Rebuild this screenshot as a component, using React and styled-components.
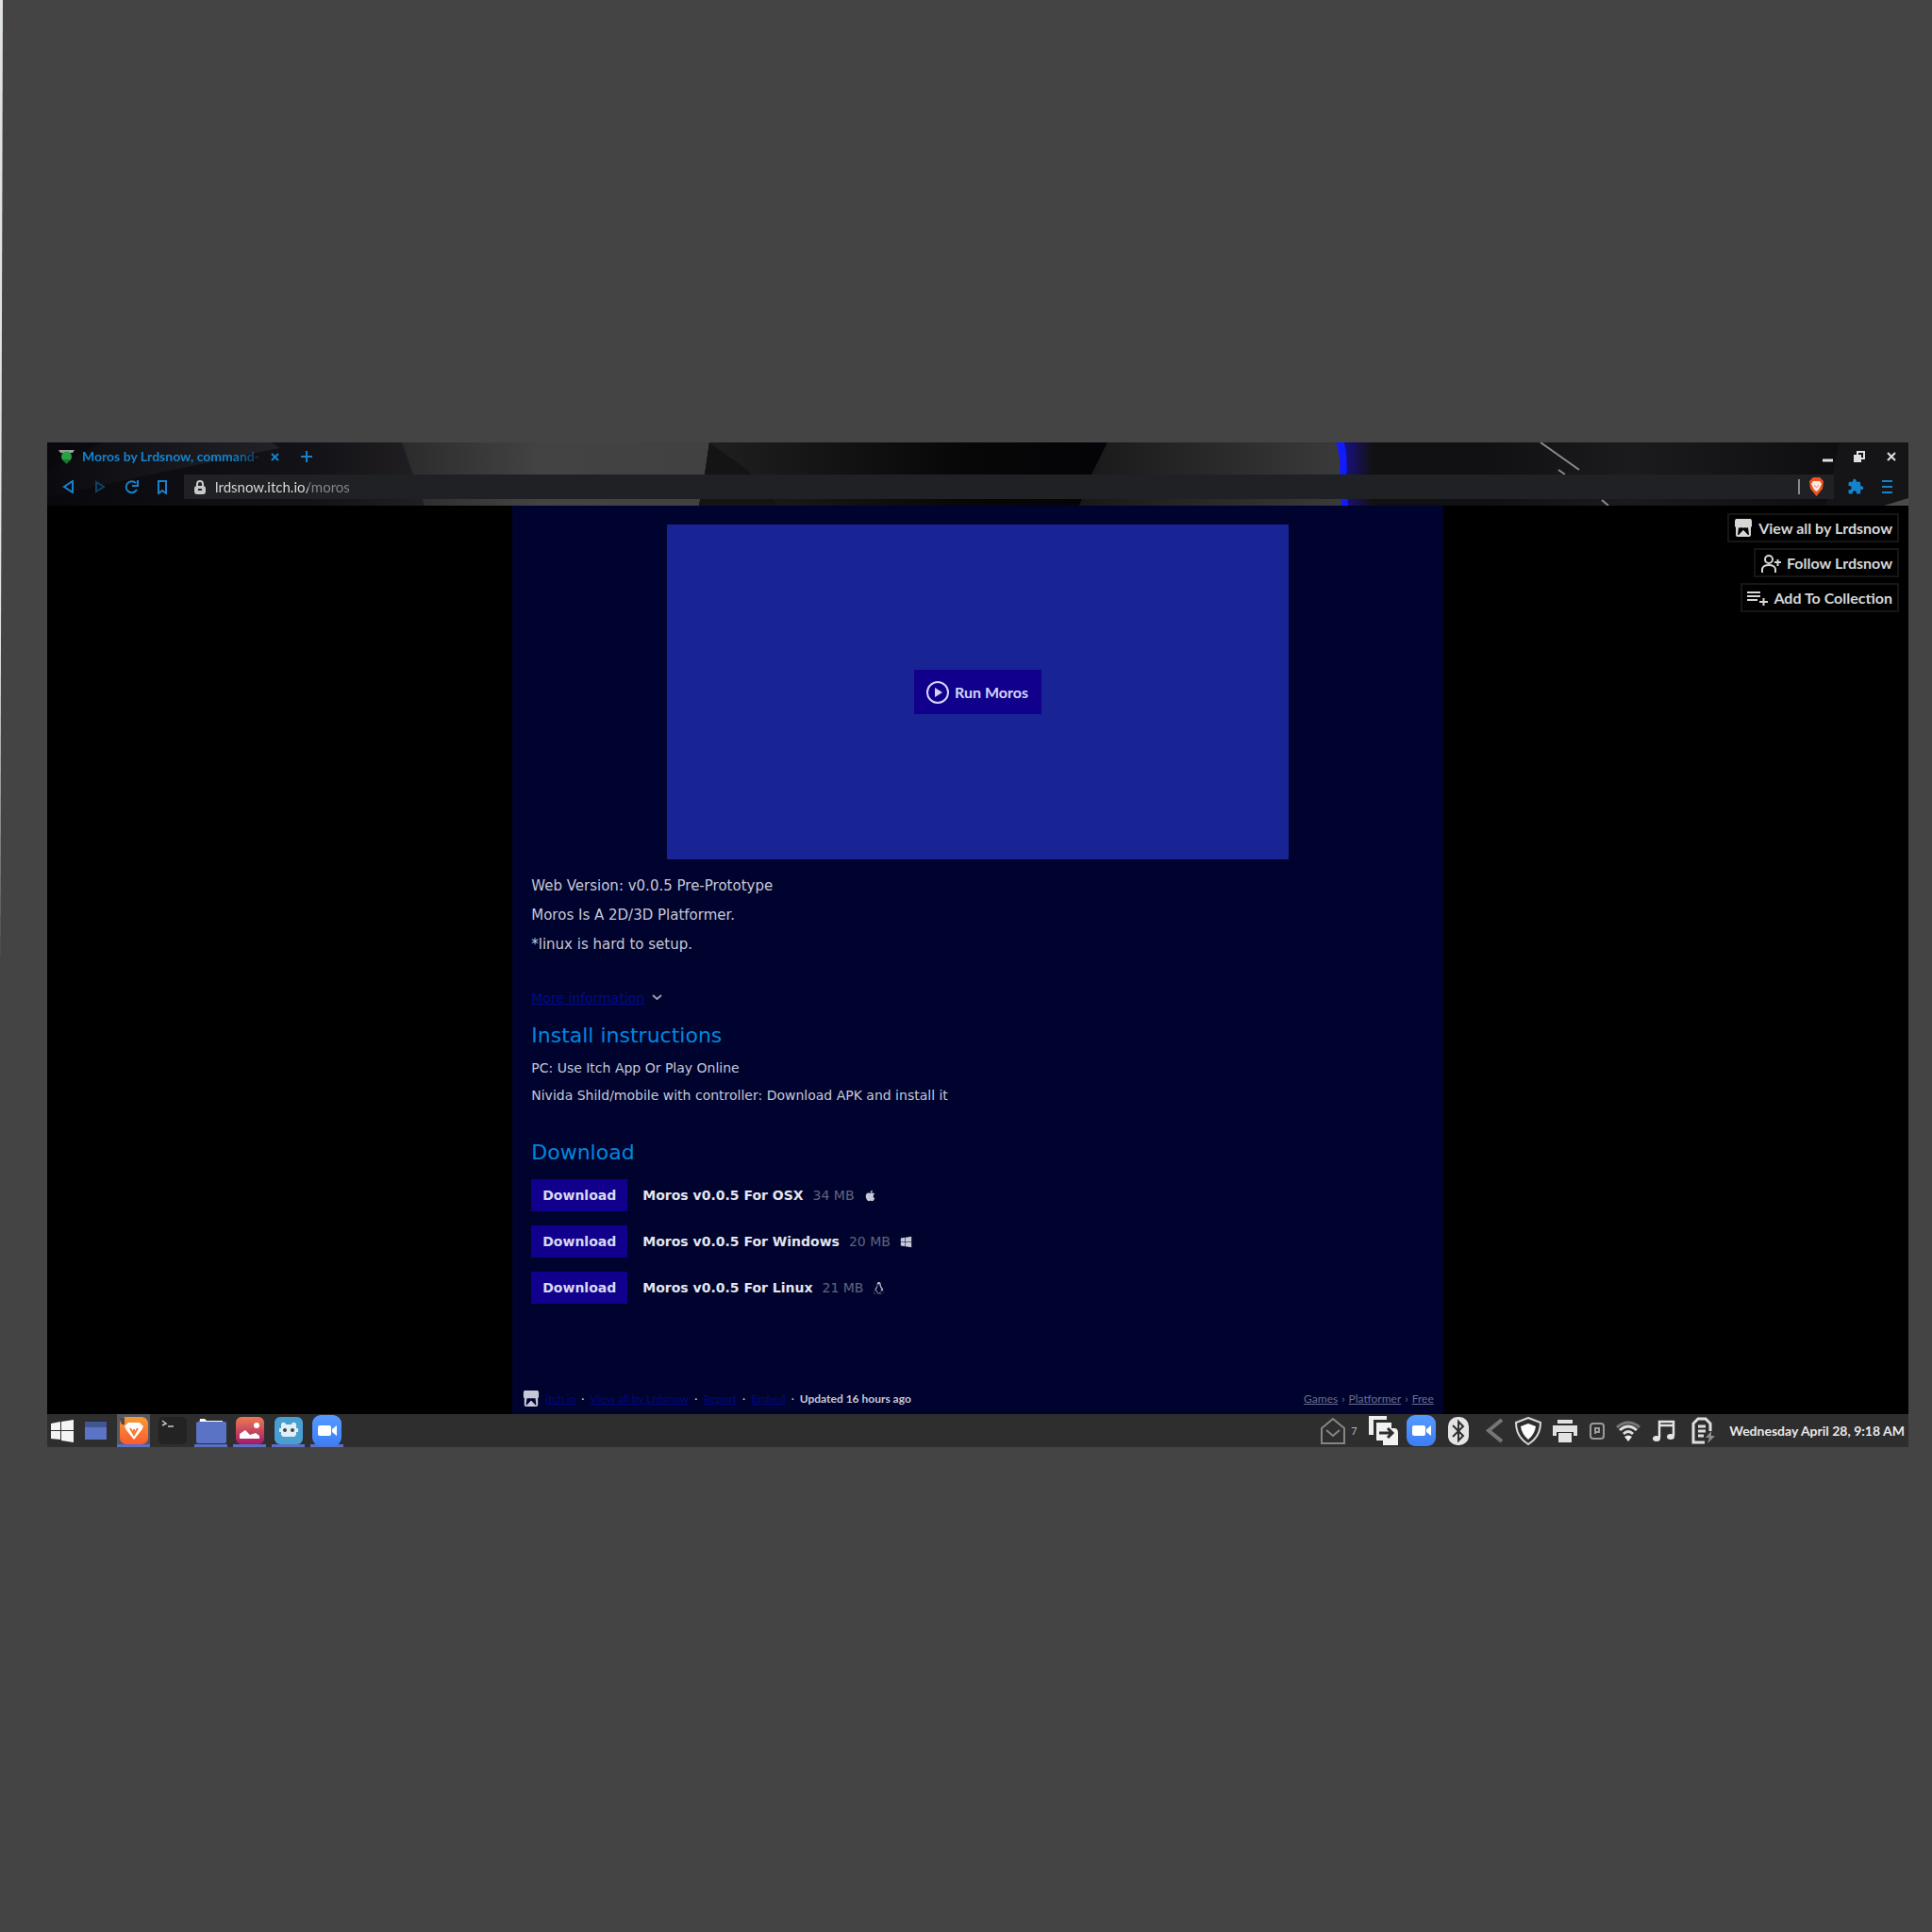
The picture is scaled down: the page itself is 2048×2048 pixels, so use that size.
import React from "react";
import styled, { createGlobalStyle, css } from "styled-components";
import { FaApple, FaWindows, FaLinux } from "react-icons/fa";
import { MdExtension } from "react-icons/md";

const display = '"DejaVu Sans", sans-serif';
const ui = 'Lato, "Noto Sans", sans-serif';

const GlobalStyle = createGlobalStyle`
  * { box-sizing: border-box; }
  html, body { margin: 0; min-height: 100vh; background: #444444; }
  button, input { font: inherit; color: inherit; border: 0; padding: 0; margin: 0; background: none; }
  button { cursor: pointer; }
  p, h1, h2, ul { margin: 0; padding: 0; }
  svg { display: block; flex: none; }
`;

const Canvas = styled.div`
  position: relative;
  min-height: 100vh;
  padding: 469px 25px 0 50px;
  font-family: ${ui};
  &::before {
    content: "";
    position: absolute;
    left: 0;
    top: 0;
    width: 3px;
    height: 50%;
    background: #dfe3e1;
    clip-path: polygon(0 0, 100% 0, 0 100%);
  }
`;

const Desktop = styled.div`
  display: flex;
  flex-direction: column;
  background: #000;
`;

const Chrome = styled.header`
  position: relative;
  height: 67px;
  padding-bottom: 6px;
  display: flex;
  flex-direction: column;
  color: #1583cc;
  overflow: hidden;
`;

const Wallpaper = styled.svg`
  position: absolute;
  inset: 0;
  width: 100%;
  height: 100%;
`;

const TabRow = styled.div`
  position: relative;
  height: 34px;
  padding: 0 12px;
  display: flex;
  align-items: center;
  justify-content: space-between;
`;

const TabStrip = styled.div`
  display: flex;
  align-items: center;
  gap: 12px;
  padding-bottom: 4px;
`;

const Tab = styled.button`
  display: flex;
  align-items: center;
  gap: 8px;
  height: 24px;
`;

const TabTitle = styled.span`
  min-width: 184px;
  white-space: nowrap;
  text-align: left;
  font-size: 14px;
  font-weight: 700;
  line-height: 20px;
  mask-image: linear-gradient(90deg, #000 85%, rgba(0, 0, 0, 0.3));
`;

const IconButton = styled.button`
  width: ${(p) => p.$w || 20}px;
  height: 24px;
  display: grid;
  place-items: center;
  color: ${(p) => p.$tone || "inherit"};
  background: ${(p) => p.$fill || "none"};
`;

const WindowButtons = styled.div`
  display: flex;
  gap: 14px;
  padding-bottom: 4px;
  margin-right: -4px;
`;

const ToolRow = styled.div`
  position: relative;
  height: 26px;
  display: flex;
  align-items: center;
  padding: 0 13px;
  gap: 13px;
`;

const Address = styled.div`
  flex: 1;
  height: 26px;
  padding: 0 10px;
  display: flex;
  align-items: center;
  gap: 9px;
  background: #202124;
  color: #c9c9c9;
`;

const AddressInput = styled.input`
  flex: 1;
  min-width: 0;
  height: 24px;
  outline: 0;
  font-size: 15px;
  line-height: 24px;
  background: linear-gradient(90deg, #e0e0e0 99px, #85868a 99px);
  background-clip: text;
  -webkit-background-clip: text;
  -webkit-text-fill-color: transparent;
`;

const Divider = styled.span`
  width: 2px;
  height: 16px;
  background: #8a8a8c;
`;

const Page = styled.main`
  display: grid;
  grid-template-columns: 1fr 2fr 1fr;
  background: #000;
`;

const Column = styled.article`
  grid-column: 2;
  display: flex;
  flex-direction: column;
  padding: 20px 20px 6px;
  background: #00032d;
  color: #c6c8d8;
  font-family: ${display};
  font-size: 14px;
`;

const Player = styled.section`
  width: 100%;
  max-width: 659px;
  height: 355px;
  margin: 0 auto 13px;
  display: grid;
  place-items: center;
  background: #182494;
`;

const RunButton = styled.button`
  height: 47px;
  padding: 0 14px 0 13px;
  display: flex;
  align-items: center;
  gap: 6px;
  background: #11008c;
  color: #d4d4fa;
  font-family: ${ui};
  font-size: 16px;
  font-weight: 700;
`;

const Line = styled.p`
  font-size: ${(p) => (p.$tight ? 14 : 15)}px;
  line-height: ${(p) => (p.$tight ? 29 : 31)}px;
`;

const MoreRow = styled.div`
  height: 31px;
  margin: 25px 0 10px;
  display: flex;
  align-items: center;
  gap: 8px;
`;

const PageLink = styled.a`
  color: #000c88;
  text-decoration: underline;
`;

const Heading = styled.h2`
  margin: ${(p) => p.$margin};
  font-size: 22px;
  font-weight: 400;
  line-height: 30px;
  color: #0087dd;
`;

const Uploads = styled.ul`
  list-style: none;
  display: grid;
  gap: 15px;
`;

const Upload = styled.li`
  height: 34px;
  display: flex;
  align-items: center;
  gap: 10px;
`;

const DownloadButton = styled.button`
  width: 102px;
  height: 34px;
  margin-right: 6px;
  background: #11008c;
  color: #d8d8f4;
  font-weight: 700;
`;

const UploadName = styled.strong`
  color: #e4e5ee;
`;

const UploadSize = styled.span`
  color: #60637f;
`;

const Footer = styled.footer`
  height: 20px;
  margin: 91px -10px 0 -9px;
  display: flex;
  align-items: center;
  justify-content: space-between;
  font-family: ${ui};
  font-size: 12px;
  line-height: 20px;
`;

const FooterGroup = styled.div`
  display: flex;
  align-items: center;
  gap: ${(p) => p.$gap}px;
  color: ${(p) => p.$tone || "inherit"};
  a { color: ${(p) => p.$link}; }
`;

const Actions = styled.aside`
  padding: 8px 10px;
  display: flex;
  flex-direction: column;
  align-items: flex-end;
  gap: 6px;
`;

const ActionButton = styled.button`
  height: 31px;
  padding: 0 5px;
  display: flex;
  align-items: center;
  gap: 6px;
  border: 2px solid #161616;
  color: #d6d6d6;
  font-size: 16px;
  font-weight: 700;
`;

const Taskbar = styled.nav`
  height: 35px;
  padding-right: 4px;
  display: flex;
  align-items: stretch;
  justify-content: space-between;
  background: #2e2e2e;
  color: #e8e8e8;
`;

const TaskGroup = styled.div`
  display: flex;
`;

const Task = styled.button`
  width: ${(p) => p.$w || 41}px;
  display: grid;
  place-items: center;
  ${(p) =>
    p.$open &&
    css`
      background: linear-gradient(#5a70c2, #5a70c2) bottom / 35px 3px no-repeat
        ${p.$active ? ", linear-gradient(#55585f, #55585f) center / 35px 100% no-repeat" : ""};
    `}
`;

const TrayCount = styled.span`
  width: 17px;
  padding-left: 3px;
  font-size: 11px;
  line-height: 35px;
  color: #a8b4c4;
`;

const Clock = styled.time`
  padding-left: 6px;
  font-size: 14px;
  font-weight: 700;
  line-height: 36px;
  white-space: nowrap;
`;

function Backdrop() {
  return (
    <Wallpaper viewBox="0 0 1973 67" preserveAspectRatio="none" aria-hidden="true">
      <defs>
        <linearGradient id="left"><stop offset="0" stopColor="#09080c" /><stop offset=".7" stopColor="#131216" /><stop offset="1" stopColor="#211f22" /></linearGradient>
        <linearGradient id="beam"><stop offset="0" stopColor="#0b0a0e" /><stop offset="1" stopColor="#222226" /></linearGradient>
        <linearGradient id="silver"><stop offset="0" stopColor="#2b2b2b" /><stop offset=".45" stopColor="#434343" /><stop offset="1" stopColor="#414141" /></linearGradient>
        <linearGradient id="fall"><stop offset="0" stopColor="#202020" /><stop offset=".65" stopColor="#070707" /><stop offset="1" stopColor="#040307" /></linearGradient>
        <linearGradient id="rise"><stop offset="0" stopColor="#181818" /><stop offset="1" stopColor="#3a3a3a" /></linearGradient>
        <linearGradient id="glow"><stop offset="0" stopColor="#1a0f90" /><stop offset="1" stopColor="#121114" /></linearGradient>
        <linearGradient id="haze"><stop offset="0" stopColor="#111013" /><stop offset=".4" stopColor="#1b1a1c" /><stop offset="1" stopColor="#0e0d10" /></linearGradient>
      </defs>
      <rect width="1973" height="67" fill="#111013" />
      <rect width="400" height="67" fill="url(#left)" />
      <path d="M60 0H238L246 6L100 36L0 58V30Z" fill="url(#beam)" />
      <path d="M376 0H702L697 34L691 67H400L388 34Z" fill="url(#silver)" />
      <path d="M702 0H1124L1107 34L1095 67H691L697 34Z" fill="url(#fall)" />
      <path d="M702 0L743 30L775 67H691L697 34Z" fill="#141414" />
      <path d="M1124 0H1372V67H1094L1107 34Z" fill="url(#rise)" />
      <rect x="1372" width="32" height="67" fill="url(#glow)" />
      <path d="M1366 0H1375Q1379 18 1377 34L1379 67H1372L1370 34Q1372 16 1366 0Z" fill="#101cff" />
      <rect x="1530" width="370" height="67" fill="url(#haze)" />
      <path d="M1583 0L1624 29M1602 29L1609 34M1648 61L1655 67" stroke="#8b8b8b" strokeWidth="2" />
      <path d="M1900 0H1973V67H1885Z" fill="#151417" />
      <path d="M1947 67L1973 59V67Z" fill="#4a4a4a" />
    </Wallpaper>
  );
}

const Svg = ({ s = 16, h, children, ...rest }) => (
  <svg width={s} height={h || s} viewBox={`0 0 ${s} ${h || s}`} fill="none" stroke="currentColor" strokeWidth="2" aria-hidden="true" {...rest}>
    {children}
  </svg>
);

const ShopIcon = ({ s = 20 }) => (
  <svg width={s} height={s} viewBox="0 0 20 20" aria-hidden="true">
    <path fill="currentColor" fillRule="evenodd" d="M2 0H18L19 2V8L18 9V17Q18 19 16 19H4Q2 19 2 17V9L1 8V2ZM5 9L4 17H6L10 12L14 17H16L15 9Q13 10 12 9Q10 10 8 9Q6 10 5 9Z" />
    <path fill="currentColor" d="M10 12L15 17H5Z" />
  </svg>
);

const BraveShield = () => (
  <svg width="17" height="20" viewBox="0 0 17 20" aria-hidden="true">
    <path d="M5 0H12L16 4L15 12L8.500 20L2 12L1 4Z" fill="#ee5320" />
    <path d="M5 4H12L14 7L11 13L8.500 15L6 13L3 7Z" fill="#fbe9e2" />
    <path d="M6 8L8.500 11L11 8" stroke="#ee8a66" fill="none" />
  </svg>
);

const VideoApp = () => (
  <svg width="33" height="33" viewBox="0 0 33 33" aria-hidden="true">
    <defs><linearGradient id="vid" x2="0" y2="1"><stop stopColor="#559bff" /><stop offset="1" stopColor="#3c7df5" /></linearGradient></defs>
    <rect x="1" width="31" height="33" rx="9" fill="url(#vid)" />
    <rect x="7" y="11" width="14" height="11" rx="2" fill="#fff" />
    <path d="M22 15L27 11V22L22 18Z" fill="#fff" />
  </svg>
);

const tasks = [
  {
    name: "Start menu", w: 32,
    icon: <svg width="24" height="24" viewBox="0 0 24 24" fill="#f4f4f4"><path d="M0 4L10 2V11H0ZM11 2L24 0V11H11ZM0 12H10V21L0 20ZM11 12H24V24L11 22Z" /></svg>,
  },
  {
    name: "Show desktop", w: 39,
    icon: <svg width="23" height="19" viewBox="0 0 23 19"><rect width="23" height="19" fill="#5b74c6" /><rect width="23" height="6" fill="#435694" /></svg>,
  },
  {
    name: "Brave", open: true, active: true,
    icon: (
      <svg width="32" height="31" viewBox="0 0 32 31">
        <defs><linearGradient id="brv" x2="0" y2="1"><stop stopColor="#f79a34" /><stop offset="1" stopColor="#fb5a30" /></linearGradient></defs>
        <rect x="1" y="1" width="30" height="29" rx="7" fill="url(#brv)" />
        <path d="M10 7H22L26 11L24 15L16 25L8 15L6 11Z" fill="#fff" />
        <path d="M12 13L16 20L20 13M16 14V19" stroke="#f77a32" strokeWidth="2" fill="none" />
        <path d="M1 2H6V9H3Z" fill="#4b4b4b" />
      </svg>
    ),
  },
  {
    name: "Terminal",
    icon: <svg width="30" height="29" viewBox="0 0 30 29"><rect width="30" height="29" rx="5" fill="#232323" /><path d="M4 4L8 7L4 9M10 10H16" stroke="#c8c8c8" strokeWidth="1.5" fill="none" /></svg>,
  },
  {
    name: "Files", open: true,
    icon: <svg width="32" height="27" viewBox="0 0 32 27"><path d="M4 1H9L11 3H28V7H3Z" fill="#fff" /><rect y="4" width="32" height="23" rx="2" fill="#5a73c5" /></svg>,
  },
  {
    name: "Pictures", open: true,
    icon: (
      <svg width="30" height="29" viewBox="0 0 30 29">
        <defs><linearGradient id="pic" x2="0" y2="1"><stop stopColor="#ee7b52" /><stop offset="1" stopColor="#a3186c" /></linearGradient></defs>
        <rect width="30" height="29" rx="6" fill="url(#pic)" />
        <circle cx="22" cy="9" r="3" fill="#fff" />
        <path d="M4 23V18L10 14L15 19L21 17L25 20V23Z" fill="#fff" />
      </svg>
    ),
  },
  {
    name: "Chat bot", open: true,
    icon: (
      <svg width="30" height="29" viewBox="0 0 30 29">
        <rect width="30" height="29" rx="6" fill="#4a9fd2" />
        <path d="M8 6H11L12 8H18L19 6H22L23 8V12H25V16H23V19L21 21H9L7 19V16H5V12H7V8Z" fill="#e3eef4" />
        <circle cx="11" cy="14" r="2" fill="#31495a" /><circle cx="19" cy="14" r="2" fill="#31495a" />
      </svg>
    ),
  },
  { name: "Video meeting", open: true, icon: <VideoApp /> },
];

const tray = [
  {
    name: "Clipboard", w: 40,
    icon: <svg width="31" height="31" viewBox="0 0 31 31"><path d="M0 20V0H19V4H5V20Z" fill="#eee" /><path d="M8 7H24V13H27Q31 13 31 18V31H15V26H8Z" fill="#f2f2f2" /><path d="M11 18H24M20 13L25 18L20 23" stroke="#2e2e2e" strokeWidth="3" fill="none" /></svg>,
  },
  { name: "Video meeting", w: 40, icon: <VideoApp /> },
  {
    name: "Bluetooth", w: 40,
    icon: <svg width="22" height="30" viewBox="0 0 22 30"><rect width="22" height="30" rx="10" fill="#e4e4e4" /><path d="M5 9L16 20L11 25V5L16 10L5 21" stroke="#2e2e2e" strokeWidth="2" fill="none" /></svg>,
  },
  { name: "Expand tray", w: 34, icon: <svg width="21" height="27" viewBox="0 0 21 27"><path d="M19 2L5 13.5L19 25" stroke="#767676" strokeWidth="4" fill="none" /></svg> },
  {
    name: "Security", w: 40,
    icon: <svg width="30" height="30" viewBox="0 0 30 30"><path d="M15 1L28 6Q28 21 15 29Q2 21 2 6Z" fill="none" stroke="#d8d8d8" strokeWidth="2" /><path d="M15 7L23 10Q22 18 15 24Q8 18 7 10Z" fill="#fff" /></svg>,
  },
  {
    name: "Printer", w: 38,
    icon: <svg width="26" height="24" viewBox="0 0 26 24" fill="#e2e2e2"><rect x="5" width="16" height="4" /><path d="M0 6H26V17H22V13H4V17H0Z" /><rect x="6" y="14" width="14" height="10" /></svg>,
  },
  {
    name: "Device", w: 30,
    icon: <Svg s={16} h={18} stroke="#9a9a9a"><rect x="1" y="1" width="14" height="16" rx="3" /><path d="M6 12V6H10V10H6" /></Svg>,
  },
  {
    name: "Wi-Fi", w: 36,
    icon: (
      <svg width="28" height="22" viewBox="0 0 28 22" fill="none" strokeWidth="3">
        <path d="M2 7Q14 -3 26 7" stroke="#777" />
        <path d="M5 10Q14 2 23 10M9 14Q14 9 19 14" stroke="#ddd" />
        <path d="M14 22L10 17Q14 14 18 17Z" fill="#eee" />
      </svg>
    ),
  },
  {
    name: "Music", w: 40,
    icon: <svg width="24" height="24" viewBox="0 0 24 24"><path d="M7 19V2H22V17M7 6H22" stroke="#e4e4e4" strokeWidth="2.500" fill="none" /><ellipse cx="4" cy="20" rx="4" ry="3" fill="#e4e4e4" /><ellipse cx="19" cy="18" rx="4" ry="3" fill="#e4e4e4" /></svg>,
  },
  {
    name: "Battery", w: 43,
    icon: (
      <svg width="26" height="29" viewBox="0 0 26 29" fill="none" stroke="#dedede" strokeWidth="2">
        <path d="M14 27H2V7L7 2H15L20 7V15" strokeWidth="3" />
        <path d="M7 10H15M7 15H15M7 20H13" strokeWidth="3" />
        <path d="M21 15L15 22H19L17 28L25 20H21Z" fill="#8d8d8d" stroke="none" />
      </svg>
    ),
  },
];

const uploads = [
  { name: "Moros v0.0.5 For OSX", size: "34 MB", Icon: FaApple },
  { name: "Moros v0.0.5 For Windows", size: "20 MB", Icon: FaWindows },
  { name: "Moros v0.0.5 For Linux", size: "21 MB", Icon: FaLinux },
];

const actions = [
  { label: "View all by Lrdsnow", icon: <ShopIcon /> },
  { label: "Follow Lrdsnow", icon: <Svg s={22} h={20}><circle cx="9" cy="6" r="4" /><path d="M2 20V16Q3 12 9 12Q15 12 16 16V20M15 9H22M18.500 6V13" /></Svg> },
  { label: "Add To Collection", icon: <Svg s={22} h={16}><path d="M0 2H14M0 6H14M0 10H11M13 12H22M17.500 8V16" /></Svg> },
];

export default function App() {
  return (
    <Canvas>
      <GlobalStyle />
      <Desktop>
        <Chrome>
          <Backdrop />
          <TabRow>
            <TabStrip>
              <Tab>
                <svg width="17" height="16" viewBox="0 0 17 16" aria-hidden="true">
                  <path d="M0 1H17L15 4H2Z" fill="#9aa09c" />
                  <circle cx="8.500" cy="8" r="5.500" fill="#25a244" />
                  <path d="M4 11L8.500 16L13 11Z" fill="#167a2e" />
                </svg>
                <TabTitle>Moros by Lrdsnow, command-</TabTitle>
              </Tab>
              <IconButton $w={10} aria-label="Close tab">
                <Svg s={9}><path d="M1 1L8 8M8 1L1 8" /></Svg>
              </IconButton>
              <IconButton $w={32} aria-label="New tab">
                <Svg s={12}><path d="M6 0V12M0 6H12" /></Svg>
              </IconButton>
            </TabStrip>
            <WindowButtons>
              <IconButton $tone="#e0e0e0" aria-label="Minimize"><Svg s={11}><path d="M0 9H11" strokeWidth="3" /></Svg></IconButton>
              <IconButton $tone="#e0e0e0" aria-label="Restore">
                <Svg s={12}><rect x="4" y="1" width="7" height="7" /><rect x="0" y="4" width="8" height="8" fill="currentColor" stroke="none" /></Svg>
              </IconButton>
              <IconButton $tone="#e0e0e0" aria-label="Close"><Svg s={10}><path d="M1 1L9 9M9 1L1 9" /></Svg></IconButton>
            </WindowButtons>
          </TabRow>
          <ToolRow>
            <IconButton aria-label="Back"><Svg s={14}><path d="M11 1V13L2 7Z" /></Svg></IconButton>
            <IconButton $tone="#0c4368" aria-label="Forward"><Svg s={14}><path d="M3 2V12L11 7Z" /></Svg></IconButton>
            <IconButton aria-label="Reload"><Svg s={15}><path d="M12 3A6 6 0 1 0 13 10M14 0V6H8" /></Svg></IconButton>
            <IconButton aria-label="Bookmark"><Svg s={12} h={15}><path d="M2 1H10V14L6 11L2 14Z" /></Svg></IconButton>
            <Address>
              <Svg s={14} h={15}><rect x="1" y="6" width="12" height="9" rx="3" fill="currentColor" stroke="none" /><path d="M4 7V4Q4 1 7 1Q10 1 10 4V7" /><path d="M5 10H9" stroke="#202124" /></Svg>
              <AddressInput aria-label="Address" defaultValue="lrdsnow.itch.io/moros" />
              <Divider />
              <BraveShield />
            </Address>
            <IconButton aria-label="Extensions"><MdExtension size={18} /></IconButton>
            <IconButton aria-label="Menu"><Svg s={11} h={14}><path d="M0 1H11M0 7H11M0 13H11" /></Svg></IconButton>
          </ToolRow>
        </Chrome>

        <Page>
          <Column>
            <Player>
              <RunButton>
                <Svg s={24}><circle cx="12" cy="12" r="11" /><path d="M9 7L17 12L9 17Z" fill="currentColor" stroke="none" /></Svg>
                Run Moros
              </RunButton>
            </Player>
            <Line>Web Version: v0.0.5 Pre-Prototype</Line>
            <Line>Moros Is A 2D/3D Platformer.</Line>
            <Line>*linux is hard to setup.</Line>
            <MoreRow>
              <PageLink href="#more">More information</PageLink>
              <Svg s={11} h={7} stroke="#9a9cb0"><path d="M1 1L5.500 5L10 1" /></Svg>
            </MoreRow>
            <Heading $margin="0 0 5px">Install instructions</Heading>
            <Line $tight>PC: Use Itch App Or Play Online</Line>
            <Line $tight>Nivida Shild/mobile with controller: Download APK and install it</Line>
            <Heading $margin="31px 0 13px">Download</Heading>
            <Uploads>
              {uploads.map(({ name, size, Icon }) => (
                <Upload key={name}>
                  <DownloadButton>Download</DownloadButton>
                  <UploadName>{name}</UploadName>
                  <UploadSize>{size}</UploadSize>
                  <Icon size={13} />
                </Upload>
              ))}
            </Uploads>
            <Footer>
              <FooterGroup $link="#000880" $gap={6}>
                <ShopIcon s={18} />
                <PageLink href="#itch">itch.io</PageLink>
                <span>·</span>
                <PageLink href="#all">View all by Lrdsnow</PageLink>
                <span>·</span>
                <PageLink href="#report">Report</PageLink>
                <span>·</span>
                <PageLink href="#embed">Embed</PageLink>
                <span>·</span>
                <strong>Updated 16 hours ago</strong>
              </FooterGroup>
              <FooterGroup $tone="#6a6d92" $link="#6a6d92" $gap={4}>
                <PageLink href="#games">Games</PageLink>
                <span>›</span>
                <PageLink href="#platformer">Platformer</PageLink>
                <span>›</span>
                <PageLink href="#free">Free</PageLink>
              </FooterGroup>
            </Footer>
          </Column>
          <Actions>
            {actions.map((a) => (
              <ActionButton key={a.label}>
                {a.icon}
                {a.label}
              </ActionButton>
            ))}
          </Actions>
        </Page>

        <Taskbar>
          <TaskGroup>
            {tasks.map((t) => (
              <Task key={t.name} $w={t.w} $open={t.open} $active={t.active} aria-label={t.name}>
                {t.icon}
              </Task>
            ))}
          </TaskGroup>
          <TaskGroup>
            <Task $w={32} aria-label="Mail">
              <Svg s={26} h={28} stroke="#858585"><path d="M1 27V11L13 1L25 11V27ZM6 13L13 19L20 13" /></Svg>
            </Task>
            <TrayCount>7</TrayCount>
            {tray.map((t) => (
              <Task key={t.name} $w={t.w} aria-label={t.name}>
                {t.icon}
              </Task>
            ))}
            <Clock>Wednesday April 28, 9:18 AM</Clock>
          </TaskGroup>
        </Taskbar>
      </Desktop>
    </Canvas>
  );
}
